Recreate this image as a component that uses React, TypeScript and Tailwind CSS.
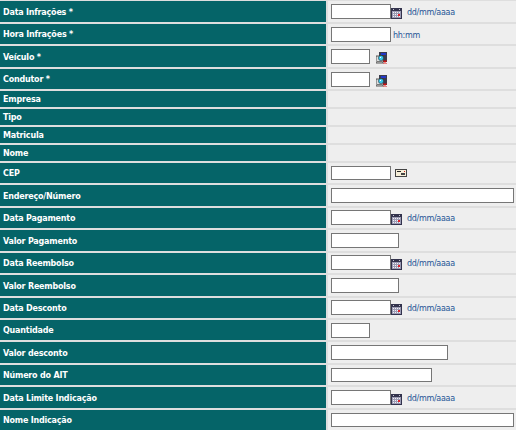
const cal = (
  <svg width="11" height="11" viewBox="0 0 11 11" className="shrink-0">
    <rect width="11" height="11" fill="#33334d" />
    <rect x="1" y="3" width="9" height="7" fill="#9c9cb4" />
    <path d="M2 4h1v1H2zM4 4h1v1H4zM6 4h1v1H6zM8 4h1v1H8zM2 6h1v1H2zM4 6h1v1H4zM6 6h1v1H6zM2 8h1v1H2zM4 8h1v1H4zM6 8h1v1H6zM8 8h1v1H8z" fill="#f2f2f6" />
    <rect x="7" y="6" width="2" height="2" fill="#e0202a" />
    <rect x="2" y="1" width="1" height="1" fill="#c8c8d4" />
    <rect x="8" y="1" width="1" height="1" fill="#c8c8d4" />
  </svg>
);

const search = (
  <svg width="11" height="12" viewBox="0 0 11 12" className="shrink-0">
    <rect x="3" y="0" width="8" height="10" fill="#3c3c4c" />
    <rect x="5" y="1" width="5" height="2" fill="#2438c8" />
    <rect x="0" y="4" width="7" height="7" fill="#dcdcdc" stroke="#333" strokeWidth="0.8" />
    <circle cx="5" cy="6" r="2.6" fill="#38c8ee" stroke="#222" strokeWidth="0.5" />
    <rect x="4" y="5" width="1" height="1" fill="#ffffff" />
    <rect x="1" y="9" width="5" height="1" fill="#777777" />
    <path d="M7.5 8.5l3 3M10.5 8.5l-3 3" stroke="#d81010" strokeWidth="1.3" />
  </svg>
);

const cepIcon = (
  <svg width="12" height="8" viewBox="0 0 12 8" className="shrink-0">
    <rect x="0.5" y="0.5" width="11" height="7" fill="#f6efd8" stroke="#444" />
    <rect x="2" y="2" width="4" height="1" fill="#222" />
    <rect x="6" y="4" width="4" height="2" fill="#444" />
    <rect x="9" y="2" width="1" height="1" fill="#d01818" />
  </svg>
);

function Input({ w, h = "h-[15px]" }: { w: string; h?: string }) {
  return <div className={`${w} ${h} bg-white border border-[#767676] shrink-0`} />;
}

function Hint({ children, ml }: { children: string; ml: string }) {
  return <span className={`${ml} text-[8px] leading-[17px] tracking-[-0.3px] text-[#1f5596]`}>{children}</span>;
}

const dateField = (
  <>
    <Input w="w-[60px]" />
    <span className="mt-[4px]">{cal}</span>
    <Hint ml="ml-[5px]">dd/mm/aaaa</Hint>
  </>
);

const rows: { label: string; h: string; top?: string; field?: React.ReactNode }[] = [
  { label: "Data Infrações *", h: "h-[21px]", field: dateField },
  {
    label: "Hora Infrações *",
    h: "h-[20px]",
    field: (
      <>
        <Input w="w-[60px]" />
        <Hint ml="ml-[2px]">hh:mm</Hint>
      </>
    ),
  },
  {
    label: "Veículo *",
    h: "h-[21px]",
    field: (
      <>
        <Input w="w-[39px]" />
        <span className="ml-[6px] mt-[3px]">{search}</span>
      </>
    ),
  },
  {
    label: "Condutor *",
    h: "h-[20px]",
    field: (
      <>
        <Input w="w-[39px]" />
        <span className="ml-[6px] mt-[3px]">{search}</span>
      </>
    ),
  },
  { label: "Empresa", h: "h-[16px]" },
  { label: "Tipo", h: "h-[16px]" },
  { label: "Matricula", h: "h-[16px]" },
  { label: "Nome", h: "h-[16px]" },
  {
    label: "CEP",
    h: "h-[20px]",
    field: (
      <>
        <Input w="w-[60px]" h="h-[14px]" />
        <span className="ml-[4px] mt-[3px]">{cepIcon}</span>
      </>
    ),
  },
  { label: "Endereço/Número", h: "h-[21px]", field: <Input w="w-[183px]" /> },
  { label: "Data Pagamento", h: "h-[20px]", top: "pt-[2px]", field: dateField },
  { label: "Valor Pagamento", h: "h-[21px]", field: <Input w="w-[68px]" /> },
  { label: "Data Reembolso", h: "h-[20px]", top: "pt-[2px]", field: dateField },
  { label: "Valor Reembolso", h: "h-[21px]", field: <Input w="w-[68px]" /> },
  { label: "Data Desconto", h: "h-[20px]", top: "pt-[2px]", field: dateField },
  { label: "Quantidade", h: "h-[20px]", field: <Input w="w-[39px]" /> },
  { label: "Valor desconto", h: "h-[21px]", field: <Input w="w-[117px]" /> },
  { label: "Número do AIT", h: "h-[20px]", field: <Input w="w-[101px]" h="h-[14px]" /> },
  { label: "Data Limite Indicação", h: "h-[21px]", field: dateField },
  { label: "Nome Indicação", h: "h-[20px]", field: <Input w="w-[183px]" h="h-[14px]" /> },
];

export default function App() {
  return (
    <div className="w-[516px] h-[430px] overflow-hidden bg-[#dedede] flex flex-col gap-[2px] pt-px font-['DejaVu_Sans',sans-serif]">
      {rows.map((row) => (
        <div key={row.label} className={`flex shrink-0 gap-[2px] ${row.h}`}>
          <div className="w-[326px] bg-[#056468] text-white text-[8px] tracking-[-0.2px] font-bold flex items-center pl-[3px] pt-[2px]">
            {row.label}
          </div>
          <div className={`flex-1 bg-[#eeeeee] flex items-start pl-[3px] ${row.top ?? "pt-[3px]"}`}>
            {row.field}
          </div>
        </div>
      ))}
    </div>
  );
}
